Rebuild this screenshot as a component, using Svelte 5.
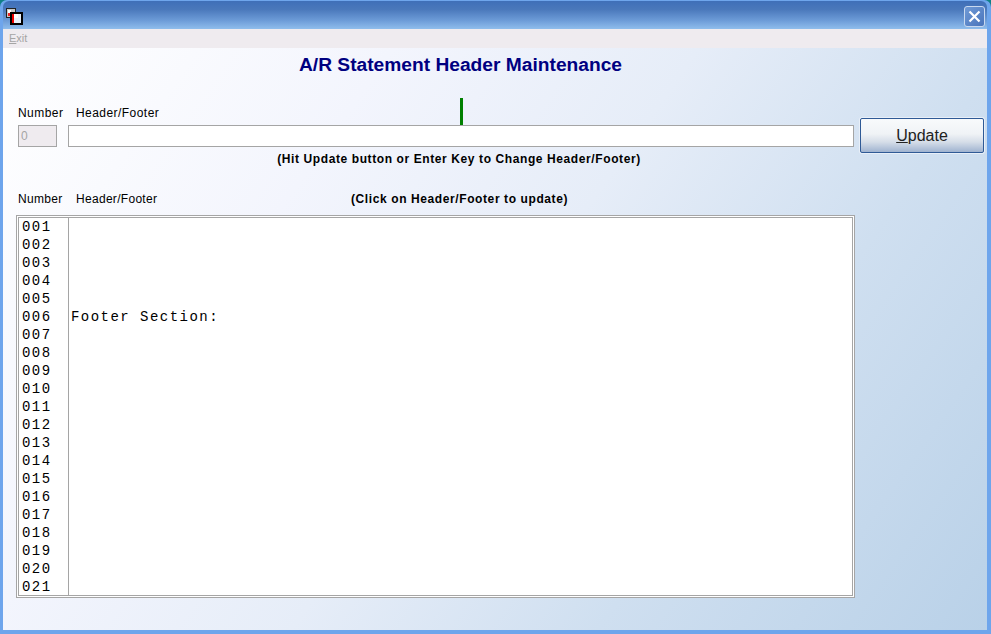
<script>
    const rows = Array.from({ length: 21 }, (_, i) => ({
        num: String(i + 1).padStart(3, '0'),
        text: i === 5 ? 'Footer Section:' : ''
    }));
</script>

<div class="desk">
    <div class="window">
        <header class="titlebar">
            <svg class="app-icon" width="17" height="17" viewBox="0 0 17 17">
                <rect x="0.5" y="0.5" width="9" height="9" fill="#c8c8c8" stroke="#222" />
                <rect x="2" y="2" width="3" height="3" fill="#fff" />
                <rect x="2" y="5" width="3" height="3" fill="#e22" />
                <rect x="5" y="5" width="11" height="11" fill="#eaf2fb" stroke="#000" stroke-width="2" />
                <rect x="6" y="6" width="2" height="9" fill="#e00" />
                <rect x="8" y="6" width="4" height="4" fill="#fff" />
            </svg>
            <button class="close" aria-label="Close">
                <svg width="13" height="13" viewBox="0 0 13 13">
                    <path d="M1.5 1.5 L11.5 11.5 M11.5 1.5 L1.5 11.5" stroke="#fff" stroke-width="2.2" />
                </svg>
            </button>
        </header>
        <nav class="menu"><span><u>E</u>xit</span></nav>
        <main class="content">
            <h1>A/R Statement Header Maintenance</h1>
            <div class="edit">
                <div class="edit-main">
                    <div class="labels top">
                        <span class="col-num">Number</span>
                        <span>Header/Footer</span>
                        <i class="tick"></i>
                    </div>
                    <div class="inputs">
                        <input class="num" value="0" disabled />
                        <input class="text" />
                    </div>
                    <p class="hint">(Hit Update button or Enter Key to Change Header/Footer)</p>
                </div>
                <button class="update"><u>U</u>pdate</button>
            </div>
            <div class="labels list-labels">
                <span class="col-num">Number</span>
                <span class="col-text">Header/Footer</span>
                <b>(Click on Header/Footer to update)</b>
            </div>
            <div class="list">
                <div class="list-inner">
                    {#each rows as row}
                        <div class="row">
                            <span class="n">{row.num}</span>
                            <span class="t">{row.text}</span>
                        </div>
                    {/each}
                </div>
            </div>
        </main>
    </div>
</div>

<style>
    :global(body) {
        margin: 0;
        background: #0f7f86;
    }

    .desk {
        width: 991px;
        height: 634px;
        overflow: hidden;
    }

    .window {
        box-sizing: border-box;
        width: 991px;
        height: 634px;
        display: flex;
        flex-direction: column;
        border: solid #6ea5ec;
        border-width: 1px 4px 4px 3px;
        border-radius: 7px 7px 0 0;
        background: #6ea5ec;
    }

    .titlebar {
        height: 28px;
        flex: none;
        display: flex;
        align-items: center;
        justify-content: space-between;
        padding: 0 2px 0 3px;
        background: linear-gradient(#3f6fb8 0, #4a78bb 30%, #6d9cd8 70%, #8fbdec 100%);
        border-radius: 6px 6px 0 0;
    }

    .app-icon {
        margin-top: 2px;
    }

    .close {
        width: 21px;
        height: 21px;
        padding: 0;
        display: flex;
        align-items: center;
        justify-content: center;
        border: 1px solid #c9d9ef;
        border-radius: 3px;
        background: linear-gradient(135deg, #6f9ad6, #4a74bb);
        margin-top: 2px;
    }

    .menu {
        height: 19px;
        flex: none;
        background: #efebef;
        font: 11px/18px "Liberation Sans", Arial, sans-serif;
        color: #a5a5a5;
        padding-left: 6px;
    }

    .content {
        flex: 1;
        min-height: 0;
        box-sizing: border-box;
        padding: 0 0 0 13px;
        background: linear-gradient(125deg, #ffffff 0%, #f3f5fd 28%, #e6edf8 50%, #cfdff0 72%, #b9d1e8 100%);
        font-family: "Liberation Sans", Arial, sans-serif;
        color: #000;
    }

    h1 {
        margin: 0;
        width: 889px;
        padding-top: 6px;
        height: 50px;
        box-sizing: border-box;
        text-align: center;
        font-size: 19.2px;
        line-height: 22px;
        font-weight: bold;
        color: #000080;
    }

    .edit {
        display: flex;
        align-items: flex-start;
    }

    .edit-main {
        width: 838px;
        flex: none;
    }

    .labels {
        display: flex;
        font-size: 12px;
        line-height: 14px;
        letter-spacing: 0.3px;
        padding-left: 2px;
    }

    .labels .col-num {
        width: 58px;
        flex: none;
    }

    .top {
        position: relative;
        height: 27px;
        padding-top: 8px;
        box-sizing: border-box;
        letter-spacing: 0.45px;
    }

    .tick {
        position: absolute;
        left: 444px;
        top: 0;
        width: 3px;
        height: 27px;
        background: #008000;
    }

    .inputs {
        display: flex;
        gap: 11px;
        padding-left: 2px;
    }

    input {
        box-sizing: border-box;
        height: 22px;
        margin: 0;
        padding: 0 2px;
        border: 1px solid #a5a5a5;
        background: #fff;
        font: 12px "Liberation Sans", Arial, sans-serif;
    }

    input.num {
        width: 39px;
        background: #efebef;
        color: #a5a5a5;
    }

    input.text {
        width: 786px;
    }

    .hint {
        margin: 4px 0 0;
        text-align: center;
        font-size: 12px;
        line-height: 16px;
        font-weight: bold;
        letter-spacing: 0.6px;
        width: 886px;
    }

    .update {
        box-sizing: border-box;
        width: 124px;
        height: 35px;
        margin: 20px 0 0 6px;
        padding: 0;
        border: 1px solid #2f5a96;
        border-radius: 2px;
        background: linear-gradient(#f8fafc 0, #f0f3f6 45%, #d5dde8 70%, #9fb3d0 100%);
        box-shadow: 0 0 0 1px #e8eff8;
        font: 16px "Liberation Sans", Arial, sans-serif;
        color: #222;
    }

    .list-labels {
        margin-top: 23px;
        height: 17px;
        align-items: center;
    }

    .col-text {
        width: 275px;
        flex: none;
    }

    .list-labels b {
        letter-spacing: 0.6px;
    }

    .list {
        box-sizing: border-box;
        width: 839px;
        height: 383px;
        margin-top: 8px;
        border: 1px solid #a5a5a5;
        background: #fff;
        padding: 1px;
    }

    .list-inner {
        height: 100%;
        box-sizing: border-box;
        border: 1px solid #a5a5a5;
        overflow: hidden;
        background: linear-gradient(to right, transparent 49px, #a5a5a5 49px, #a5a5a5 50px, transparent 50px);
    }

    .row {
        display: flex;
        height: 18px;
        font: 14px/18px "Liberation Mono", "Courier New", monospace;
        letter-spacing: 1.47px;
        color: #000;
    }

    .n {
        width: 52px;
        flex: none;
        padding-left: 3px;
        box-sizing: border-box;
    }

    .t {
        white-space: pre;
    }
</style>
